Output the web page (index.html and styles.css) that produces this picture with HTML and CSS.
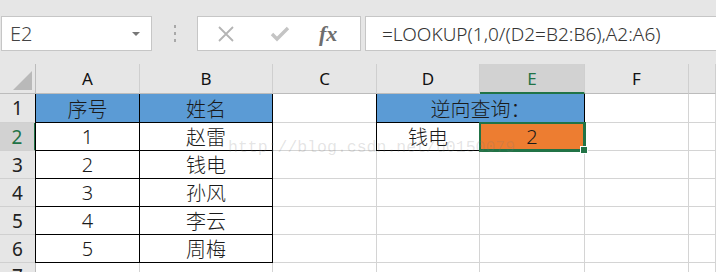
FILE: index.html
```html
<!DOCTYPE html>
<html lang="en">
  <head>
    <meta charset="UTF-8" />
    <title>LOOKUP</title>
    <link rel="stylesheet" href="styles.css">
  </head>

  <body>
    <div class="formula-bar">
      <div class="name-box">
        <span>E2</span>
        <span class="arrow"></span>
      </div>
      <div class="grip"><i></i><i></i><i></i></div>
      <div class="fx-box">
        <svg class="icon" width="18" height="18" viewBox="0 0 18 18">
          <path d="M2 2 L16 16 M16 2 L2 16" stroke="#b4b4b4" stroke-width="1.8" fill="none" />
        </svg>
        <svg class="icon" width="20" height="18" viewBox="0 0 20 18">
          <path d="M2 9 L7 14 L18 3" stroke="#c4c4c4" stroke-width="3.4" fill="none" />
        </svg>
        <span class="fx">fx</span>
      </div>
      <div class="formula-input">=LOOKUP(1,0/(D2=B2:B6),A2:A6)</div>
    </div>

    <div class="sheet">
      <div class="corner"><span class="tri"></span></div>
      <div class="col-head">A</div>
      <div class="col-head">B</div>
      <div class="col-head">C</div>
      <div class="col-head">D</div>
      <div class="col-head active">E</div>
      <div class="col-head">F</div>
      <div class="col-head"></div>

      <!-- row 1 -->
      <div class="row-head">1</div>
      <div class="cell data blue first top">序号</div>
      <div class="cell data blue top">姓名</div>
      <div class="cell"></div>
      <div class="cell data blue first top wide">逆向查询：</div>
      <div class="cell"></div>
      <div class="cell"></div>

      <!-- row 2 -->
      <div class="row-head active">2</div>
      <div class="cell data first">1</div>
      <div class="cell data">赵雷</div>
      <div class="cell"></div>
      <div class="cell data first">钱电</div>
      <div class="cell data orange selected">2<span class="handle"></span></div>
      <div class="cell"></div>
      <div class="cell"></div>

      <!-- row 3 -->
      <div class="row-head">3</div>
      <div class="cell data first">2</div>
      <div class="cell data">钱电</div>
      <div class="cell"></div>
      <div class="cell"></div>
      <div class="cell"></div>
      <div class="cell"></div>
      <div class="cell"></div>

      <!-- row 4 -->
      <div class="row-head">4</div>
      <div class="cell data first">3</div>
      <div class="cell data">孙风</div>
      <div class="cell"></div>
      <div class="cell"></div>
      <div class="cell"></div>
      <div class="cell"></div>
      <div class="cell"></div>

      <!-- row 5 -->
      <div class="row-head">5</div>
      <div class="cell data first">4</div>
      <div class="cell data">李云</div>
      <div class="cell"></div>
      <div class="cell"></div>
      <div class="cell"></div>
      <div class="cell"></div>
      <div class="cell"></div>

      <!-- row 6 -->
      <div class="row-head">6</div>
      <div class="cell data first">5</div>
      <div class="cell data">周梅</div>
      <div class="cell"></div>
      <div class="cell"></div>
      <div class="cell"></div>
      <div class="cell"></div>
      <div class="cell"></div>

      <!-- row 7 -->
      <div class="row-head">7</div>
      <div class="cell"></div>
      <div class="cell"></div>
      <div class="cell"></div>
      <div class="cell"></div>
      <div class="cell"></div>
      <div class="cell"></div>
      <div class="cell"></div>

      <div class="watermark">http://blog.csdn.net/u0150079</div>
    </div>
  </body>
</html>
```

FILE: styles.css
```css
* {
  box-sizing: border-box;
  margin: 0;
  padding: 0;
}

body {
  font-family: "Noto Sans", "Noto Sans CJK SC", sans-serif;
  background-color: #ffffff;
  width: 716px;
  height: 272px;
  overflow: hidden;
}

/* formula bar */

.formula-bar {
  display: flex;
  align-items: stretch;
  height: 64px;
  padding-top: 16px;
  padding-bottom: 13px;
  background-color: #e6e6e6;
}

.name-box {
  display: flex;
  align-items: center;
  justify-content: space-between;
  width: 151px;
  margin-left: 1px;
  padding: 0 11px 0 8px;
  background-color: #ffffff;
  border: 1px solid #c6c6c6;
  color: #444444;
  font-size: 20px;
  font-weight: 300;
}

.arrow {
  width: 0;
  height: 0;
  border-left: 4px solid transparent;
  border-right: 4px solid transparent;
  border-top: 4px solid #777777;
}

.grip {
  display: flex;
  flex-direction: column;
  justify-content: center;
  align-items: center;
  gap: 4px;
  width: 45px;
}

.grip i {
  display: block;
  width: 2px;
  height: 3px;
  background-color: #a8a8a8;
}

.fx-box {
  display: flex;
  align-items: center;
  width: 164px;
  padding-left: 19px;
  background-color: #ffffff;
  border: 1px solid #c6c6c6;
}

.icon {
  margin-right: 35px;
}

.fx {
  font-family: "Liberation Serif", serif;
  font-style: italic;
  font-weight: bold;
  font-size: 22px;
  color: #6e6e6e;
  margin-left: -6px;
}

.formula-input {
  flex: 1;
  display: flex;
  align-items: center;
  margin-left: 4px;
  padding-left: 16px;
  background-color: #ffffff;
  border: 1px solid #c6c6c6;
  border-right: none;
  color: #333333;
  font-size: 19px;
  font-weight: 300;
  white-space: nowrap;
}

/* sheet grid */

.sheet {
  position: relative;
  display: grid;
  grid-template-columns: 36px 104px 133px 104px 103px 105px 104px 1fr;
  grid-template-rows: 30px 29px 28px 28px 28px 28px 28px 1fr;
  height: 208px;
}

.corner {
  position: relative;
  background-color: #e6e6e6;
  border-right: 1px solid #bcbcbc;
  border-bottom: 1px solid #bcbcbc;
}

.tri {
  position: absolute;
  right: 3px;
  bottom: 3px;
  width: 0;
  height: 0;
  border-left: 19px solid transparent;
  border-bottom: 19px solid #b9b9b9;
}

.col-head {
  display: flex;
  align-items: center;
  justify-content: center;
  background-color: #e6e6e6;
  border-right: 1px solid #cfcfcf;
  border-bottom: 1px solid #bcbcbc;
  color: #111111;
  font-size: 17px;
}

.col-head.active {
  background-color: #d2d2d2;
  color: #217346;
  border-bottom: 2px solid #217346;
}

.row-head {
  display: flex;
  align-items: center;
  justify-content: center;
  background-color: #e6e6e6;
  border-right: 1px solid #bcbcbc;
  border-bottom: 1px solid #d0d0d0;
  color: #222222;
  font-size: 19px;
}

.row-head.active {
  background-color: #d2d2d2;
  color: #217346;
  border-right: 2px solid #217346;
}

.cell {
  display: flex;
  align-items: center;
  justify-content: center;
  border-right: 1px solid #d4d4d4;
  border-bottom: 1px solid #d4d4d4;
  color: #1a1a1a;
  font-size: 20px;
  font-weight: 300;
}

.cell.data {
  border-right-color: #000000;
  border-bottom-color: #000000;
}

.cell.first {
  box-shadow: -1px 0 0 #000000;
}

.cell.blue {
  background-color: #5b9bd5;
}

.cell.wide {
  grid-column: span 2;
}

.cell.orange {
  background-color: #ed7d31;
}

.cell.selected {
  position: relative;
  box-shadow: 0 0 0 1px #217346, inset 0 0 0 1px #217346;
  border-color: #217346;
}

.handle {
  position: absolute;
  right: -4px;
  bottom: -4px;
  width: 6px;
  height: 6px;
  background-color: #217346;
  border: 1px solid #ffffff;
  box-sizing: content-box;
}

.watermark {
  position: absolute;
  left: 228px;
  top: 74px;
  font-family: "Liberation Mono", monospace;
  font-size: 16.5px;
  color: rgba(120, 120, 120, 0.2);
  white-space: nowrap;
  pointer-events: none;
}
```
